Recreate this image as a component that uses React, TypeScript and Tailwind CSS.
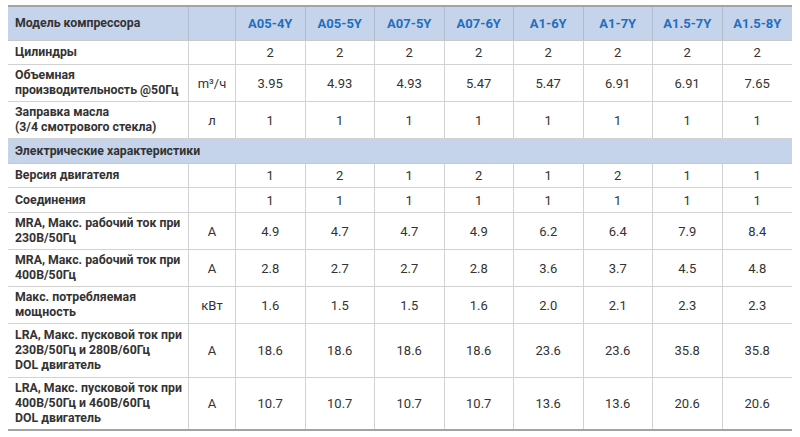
const models = ["A05-4Y", "A05-5Y", "A07-5Y", "A07-6Y", "A1-6Y", "A1-7Y", "A1.5-7Y", "A1.5-8Y"];

type Row = { label: string[]; unit?: string; values: string[]; h: string } | { section: string; h: string };

const rows: Row[] = [
  { label: ["Цилиндры"], values: ["2", "2", "2", "2", "2", "2", "2", "2"], h: "h-[24px]" },
  {
    label: ["Объемная", "производительность @50Гц"],
    unit: "m³/ч",
    values: ["3.95", "4.93", "4.93", "5.47", "5.47", "6.91", "6.91", "7.65"],
    h: "h-[37px]",
  },
  {
    label: ["Заправка масла", "(3/4 смотрового стекла)"],
    unit: "л",
    values: ["1", "1", "1", "1", "1", "1", "1", "1"],
    h: "h-[37px]",
  },
  { section: "Электрические характеристики", h: "h-[25px]" },
  { label: ["Версия двигателя"], values: ["1", "2", "1", "2", "1", "2", "1", "1"], h: "h-[24px]" },
  { label: ["Соединения"], values: ["1", "1", "1", "1", "1", "1", "1", "1"], h: "h-[25px]" },
  {
    label: ["MRA, Макс. рабочий ток при", "230В/50Гц"],
    unit: "A",
    values: ["4.9", "4.7", "4.7", "4.9", "6.2", "6.4", "7.9", "8.4"],
    h: "h-[37px]",
  },
  {
    label: ["MRA, Макс. рабочий ток при", "400В/50Гц"],
    unit: "A",
    values: ["2.8", "2.7", "2.7", "2.8", "3.6", "3.7", "4.5", "4.8"],
    h: "h-[37px]",
  },
  {
    label: ["Макс. потребляемая", "мощность"],
    unit: "кВт",
    values: ["1.6", "1.5", "1.5", "1.6", "2.0", "2.1", "2.3", "2.3"],
    h: "h-[37px]",
  },
  {
    label: ["LRA, Макс. пусковой ток при", "230В/50Гц и 280В/60Гц", "DOL двигатель"],
    unit: "A",
    values: ["18.6", "18.6", "18.6", "18.6", "23.6", "23.6", "35.8", "35.8"],
    h: "h-[54px]",
  },
  {
    label: ["LRA, Макс. пусковой ток при", "400В/50Гц и 460В/60Гц", "DOL двигатель"],
    unit: "A",
    values: ["10.7", "10.7", "10.7", "10.7", "13.6", "13.6", "20.6", "20.6"],
    h: "h-[51px]",
  },
];

const cols = "grid grid-cols-[181px_47px_repeat(8,minmax(0,1fr))]";

export default function App() {
  return (
    <div className="min-h-screen bg-white pt-[5px] pl-2 font-['Roboto',_'Liberation_Sans',_sans-serif] text-[13px] leading-[15px] text-[#333]">
      <div className="w-[784px] border-t-2 border-b-2 border-[#a3a3a3]">
        <div className={`${cols} h-[34px] border-b border-[#c9c9c9] bg-[#c5d4ea] font-bold`}>
          <div className="flex items-center border-r border-[#aebbd0] pl-[7px] text-[12.3px]">Модель компрессора</div>
          <div className="border-r border-[#aebbd0]" />
          {models.map((m, i) => (
            <div
              key={m}
              className={`flex items-center justify-center text-[#1f6fbf] ${i < models.length - 1 ? "border-r border-[#aebbd0]" : ""}`}
            >
              {m}
            </div>
          ))}
        </div>

        {rows.map((row, idx) => {
          const last = idx === rows.length - 1;
          if ("section" in row) {
            return (
              <div
                key={idx}
                className={`flex ${row.h} items-center border-b border-[#c9c9c9] bg-[#c5d4ea] pl-[7px] text-[12.3px] font-bold`}
              >
                {row.section}
              </div>
            );
          }
          return (
            <div key={idx} className={`${cols} ${row.h} ${last ? "" : "border-b border-[#d2d2d2]"}`}>
              <div className="flex flex-col justify-center whitespace-nowrap border-r border-[#d2d2d2] pl-[7px] text-[12.3px] font-bold">
                {row.label.map((l) => (
                  <span key={l}>{l}</span>
                ))}
              </div>
              <div className="flex items-center justify-center border-r border-[#d2d2d2]">{row.unit}</div>
              {row.values.map((v, i) => (
                <div
                  key={i}
                  className={`flex items-center justify-center ${i < row.values.length - 1 ? "border-r border-[#d2d2d2]" : ""}`}
                >
                  {v}
                </div>
              ))}
            </div>
          );
        })}
      </div>
    </div>
  );
}
